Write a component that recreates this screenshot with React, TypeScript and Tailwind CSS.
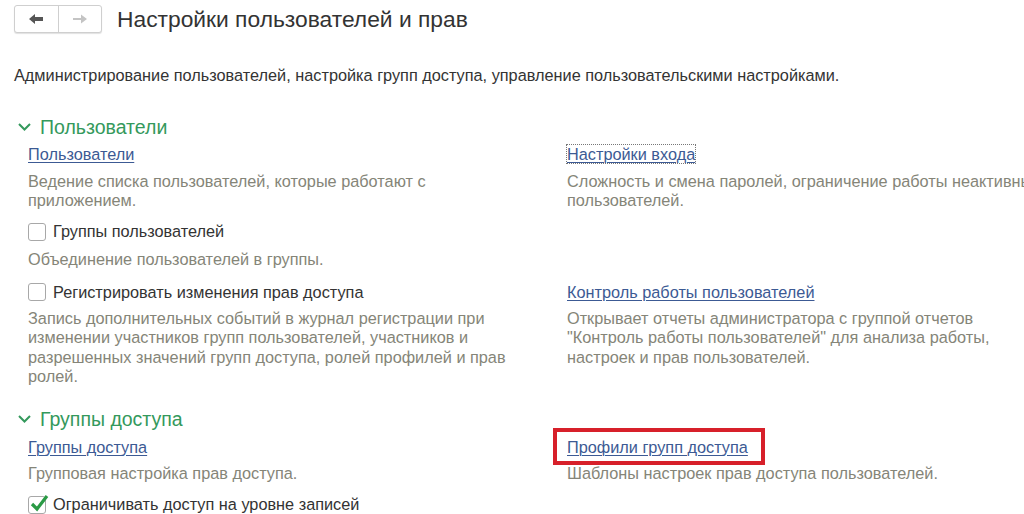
import React from 'react';

const linkCls = 'text-[#3c5a94] underline underline-offset-2 decoration-1';
const descCls = 'text-[#858578] leading-[19.5px]';

function Chevron() {
  return (
    <svg width="15" height="10" viewBox="0 0 15 10" className="shrink-0">
      <path d="M2 2 L7.5 7.5 L13 2" fill="none" stroke="#34995c" strokeWidth="2" />
    </svg>
  );
}

function Checkbox({ checked = false, label }: { checked?: boolean; label: string }) {
  return (
    <div className="flex items-center h-[19px]">
      <span className="relative w-[18px] h-[18px] border border-[#a8a8a8] rounded-[3px] bg-white shrink-0">
        {checked && (
          <svg width="22" height="20" viewBox="0 0 22 20" className="absolute left-[0px] top-[-4px]">
            <path d="M3 11 L8 16 L18 3" fill="none" stroke="#2a9a45" strokeWidth="3.2" />
          </svg>
        )}
      </span>
      <span className="ml-[7px] text-[#333]">{label}</span>
    </div>
  );
}

function SectionHeader({ title }: { title: string }) {
  return (
    <div className="flex items-center h-[24px] pl-[17px]">
      <Chevron />
      <span className="ml-[8px] text-[19.5px] text-[#34995c] leading-[24px]">{title}</span>
    </div>
  );
}

export default function App() {
  return (
    <div
      className="w-[1024px] h-[514px] overflow-hidden bg-white text-[16.3px] leading-[19px]"
      style={{ fontFamily: '"Liberation Sans", Arial, sans-serif' }}
    >
      {/* Header */}
      <div className="flex items-center pt-[5px] pl-[14px]">
        <div className="flex h-[28px] w-[88px] border border-[#cfcfcf] rounded-[3px] shadow-[0_1px_1px_rgba(0,0,0,0.12)] bg-white">
          <div className="flex-1 flex items-center justify-center border-r border-[#cfcfcf]">
            <svg width="16" height="12" viewBox="0 0 16 12">
              <path d="M1 6 L7 1 L7 4 L15 4 L15 8 L7 8 L7 11 Z" fill="#555" />
            </svg>
          </div>
          <div className="flex-1 flex items-center justify-center">
            <svg width="16" height="12" viewBox="0 0 16 12">
              <path d="M15 6 L9 1.5 L9 5 L1 5 L1 7 L9 7 L9 10.5 Z" fill="#c4c4c4" />
            </svg>
          </div>
        </div>
        <h1 className="ml-[15px] text-[22.8px] leading-[28px] text-[#333]">Настройки пользователей и прав</h1>
      </div>

      <p className="mt-[33px] ml-[14px] text-[#333] leading-[19px]">
        Администрирование пользователей, настройка групп доступа, управление пользовательскими настройками.
      </p>

      {/* Пользователи */}
      <div className="mt-[30px]">
        <SectionHeader title="Пользователи" />
        <div className="grid grid-cols-[486px_478px] gap-x-[53px] pl-[28px] mt-[6px]">
          <div>
            <a className={linkCls}>Пользователи</a>
            <p className={`${descCls} mt-[8px] leading-[19px]`}>
              Ведение списка пользователей, которые работают с приложением.
            </p>
            <div className="mt-[12px]">
              <Checkbox label="Группы пользователей" />
            </div>
            <p className={`${descCls} mt-[9px]`}>Объединение пользователей в группы.</p>
          </div>
          <div>
            <a className={`${linkCls} outline outline-1 outline-dotted outline-[#777] outline-offset-0`}>Настройки входа</a>
            <p className={`${descCls} mt-[8px] leading-[19px]`}>
              Сложность и смена паролей, ограничение работы неактивных пользователей.
            </p>
          </div>

          <div className="mt-[13px]">
            <Checkbox label="Регистрировать изменения прав доступа" />
            <p className={`${descCls} mt-[7px]`}>
              Запись дополнительных событий в журнал регистрации при изменении участников групп пользователей,
              участников и разрешенных значений групп доступа, ролей профилей и прав ролей.
            </p>
          </div>
          <div className="mt-[13px]">
            <a className={linkCls}>Контроль работы пользователей</a>
            <p className={`${descCls} mt-[7px]`}>
              Открывает отчеты администратора с группой отчетов "Контроль работы пользователей" для анализа работы,
              настроек и прав пользователей.
            </p>
          </div>
        </div>
      </div>

      {/* Группы доступа */}
      <div className="mt-[20px]">
        <SectionHeader title="Группы доступа" />
        <div className="grid grid-cols-[486px_478px] gap-x-[53px] pl-[28px] mt-[7px]">
          <div>
            <a className={linkCls}>Группы доступа</a>
            <p className={`${descCls} mt-[7px]`}>Групповая настройка прав доступа.</p>
            <div className="mt-[12px]">
              <Checkbox checked label="Ограничивать доступ на уровне записей" />
            </div>
          </div>
          <div>
            <span className="relative inline-block">
              <a className={linkCls}>Профили групп доступа</a>
              <span className="absolute left-[-14px] top-[-10px] w-[212px] h-[37px] border-4 border-[#d7202a] pointer-events-none" />
            </span>
            <p className={`${descCls} mt-[7px]`}>Шаблоны настроек прав доступа пользователей.</p>
          </div>
        </div>
      </div>
    </div>
  );
}
